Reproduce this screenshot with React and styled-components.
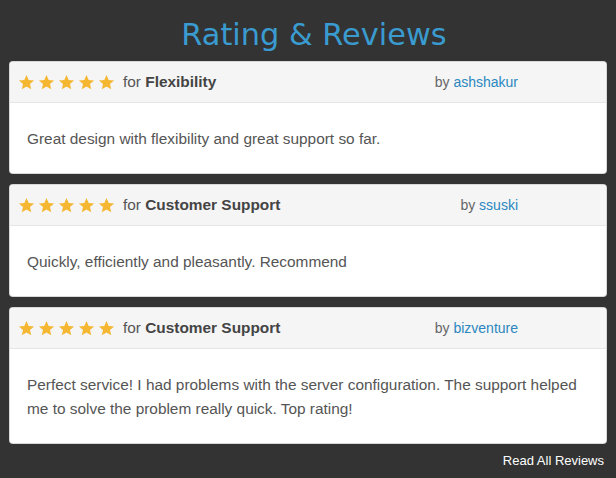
import React from "react";
import styled, { createGlobalStyle } from "styled-components";

const GlobalStyle = createGlobalStyle`
  html, body {
    margin: 0;
    padding: 0;
    background: #333333;
  }
  body {
    font-family: "Liberation Sans", Arial, sans-serif;
  }
`;

const reviews = [
  {
    topic: "Flexibility",
    author: "ashshakur",
    text: "Great design with flexibility and great support so far.",
  },
  {
    topic: "Customer Support",
    author: "ssuski",
    text: "Quickly, efficiently and pleasantly. Recommend",
  },
  {
    topic: "Customer Support",
    author: "bizventure",
    text: "Perfect service! I had problems with the server configuration. The support helped me to solve the problem really quick. Top rating!",
  },
];

function Star() {
  return (
    <StarIcon viewBox="0 0 24 24">
      <path d="M12 1.5l3.1 7.1 7.6.6-5.8 5 1.8 7.5L12 17.7l-6.7 4 1.8-7.5-5.8-5 7.6-.6z" />
    </StarIcon>
  );
}

function ReviewCard({ topic, author, text }) {
  return (
    <Card>
      <CardHeader>
        <Stars>
          {[0, 1, 2, 3, 4].map((i) => (
            <Star key={i} />
          ))}
        </Stars>
        <Topic>
          for <strong>{topic}</strong>
        </Topic>
        <Author>
          by <a href="#">{author}</a>
        </Author>
      </CardHeader>
      <CardBody>{text}</CardBody>
    </Card>
  );
}

export default function App() {
  return (
    <Page>
      <GlobalStyle />
      <Title>Rating &amp; Reviews</Title>
      <List>
        {reviews.map((r, i) => (
          <ReviewCard key={i} {...r} />
        ))}
      </List>
      <Footer>
        <ReadAll href="#">Read All Reviews</ReadAll>
      </Footer>
    </Page>
  );
}

const Page = styled.div`
  width: 616px;
  height: 478px;
  padding: 16px 10px 0 10px;
  box-sizing: border-box;
  background: #333333;
`;

const Title = styled.h1`
  margin: 0 0 9px;
  padding-left: 12px;
  text-align: center;
  font-family: "DejaVu Sans", Verdana, sans-serif;
  font-weight: normal;
  font-size: 30.4px;
  line-height: 37px;
  color: #3a9bd0;
`;

const List = styled.div`
  display: flex;
  flex-direction: column;
  gap: 12px;
`;

const Card = styled.div`
  background: #ffffff;
  border-radius: 3px;
  overflow: hidden;
  box-shadow: 0 0 0 1px #d8d8d8;
`;

const CardHeader = styled.div`
  display: flex;
  align-items: center;
  height: 40px;
  padding: 0 8px;
  background: #f5f5f5;
  border-bottom: 1px solid #e4e6e6;
`;

const Stars = styled.div`
  display: flex;
  gap: 3px;
  margin-right: 8px;
`;

const StarIcon = styled.svg`
  width: 17px;
  height: 17px;
  fill: #f5b731;
`;

const Topic = styled.span`
  flex: 1;
  font-size: 15.4px;
  color: #555555;

  strong {
    color: #444444;
  }
`;

const Author = styled.span`
  margin-right: 80px;
  font-size: 14px;
  color: #666666;

  a {
    color: #2a87c0;
    text-decoration: none;
  }
`;

const CardBody = styled.div`
  padding: 24px 17px 22px;
  font-size: 15.4px;
  line-height: 24px;
  color: #555555;
`;

const Footer = styled.div`
  display: flex;
  justify-content: flex-end;
  padding: 10px 2px 0 0;
`;

const ReadAll = styled.a`
  font-size: 13px;
  color: #ffffff;
  text-decoration: none;
`;
